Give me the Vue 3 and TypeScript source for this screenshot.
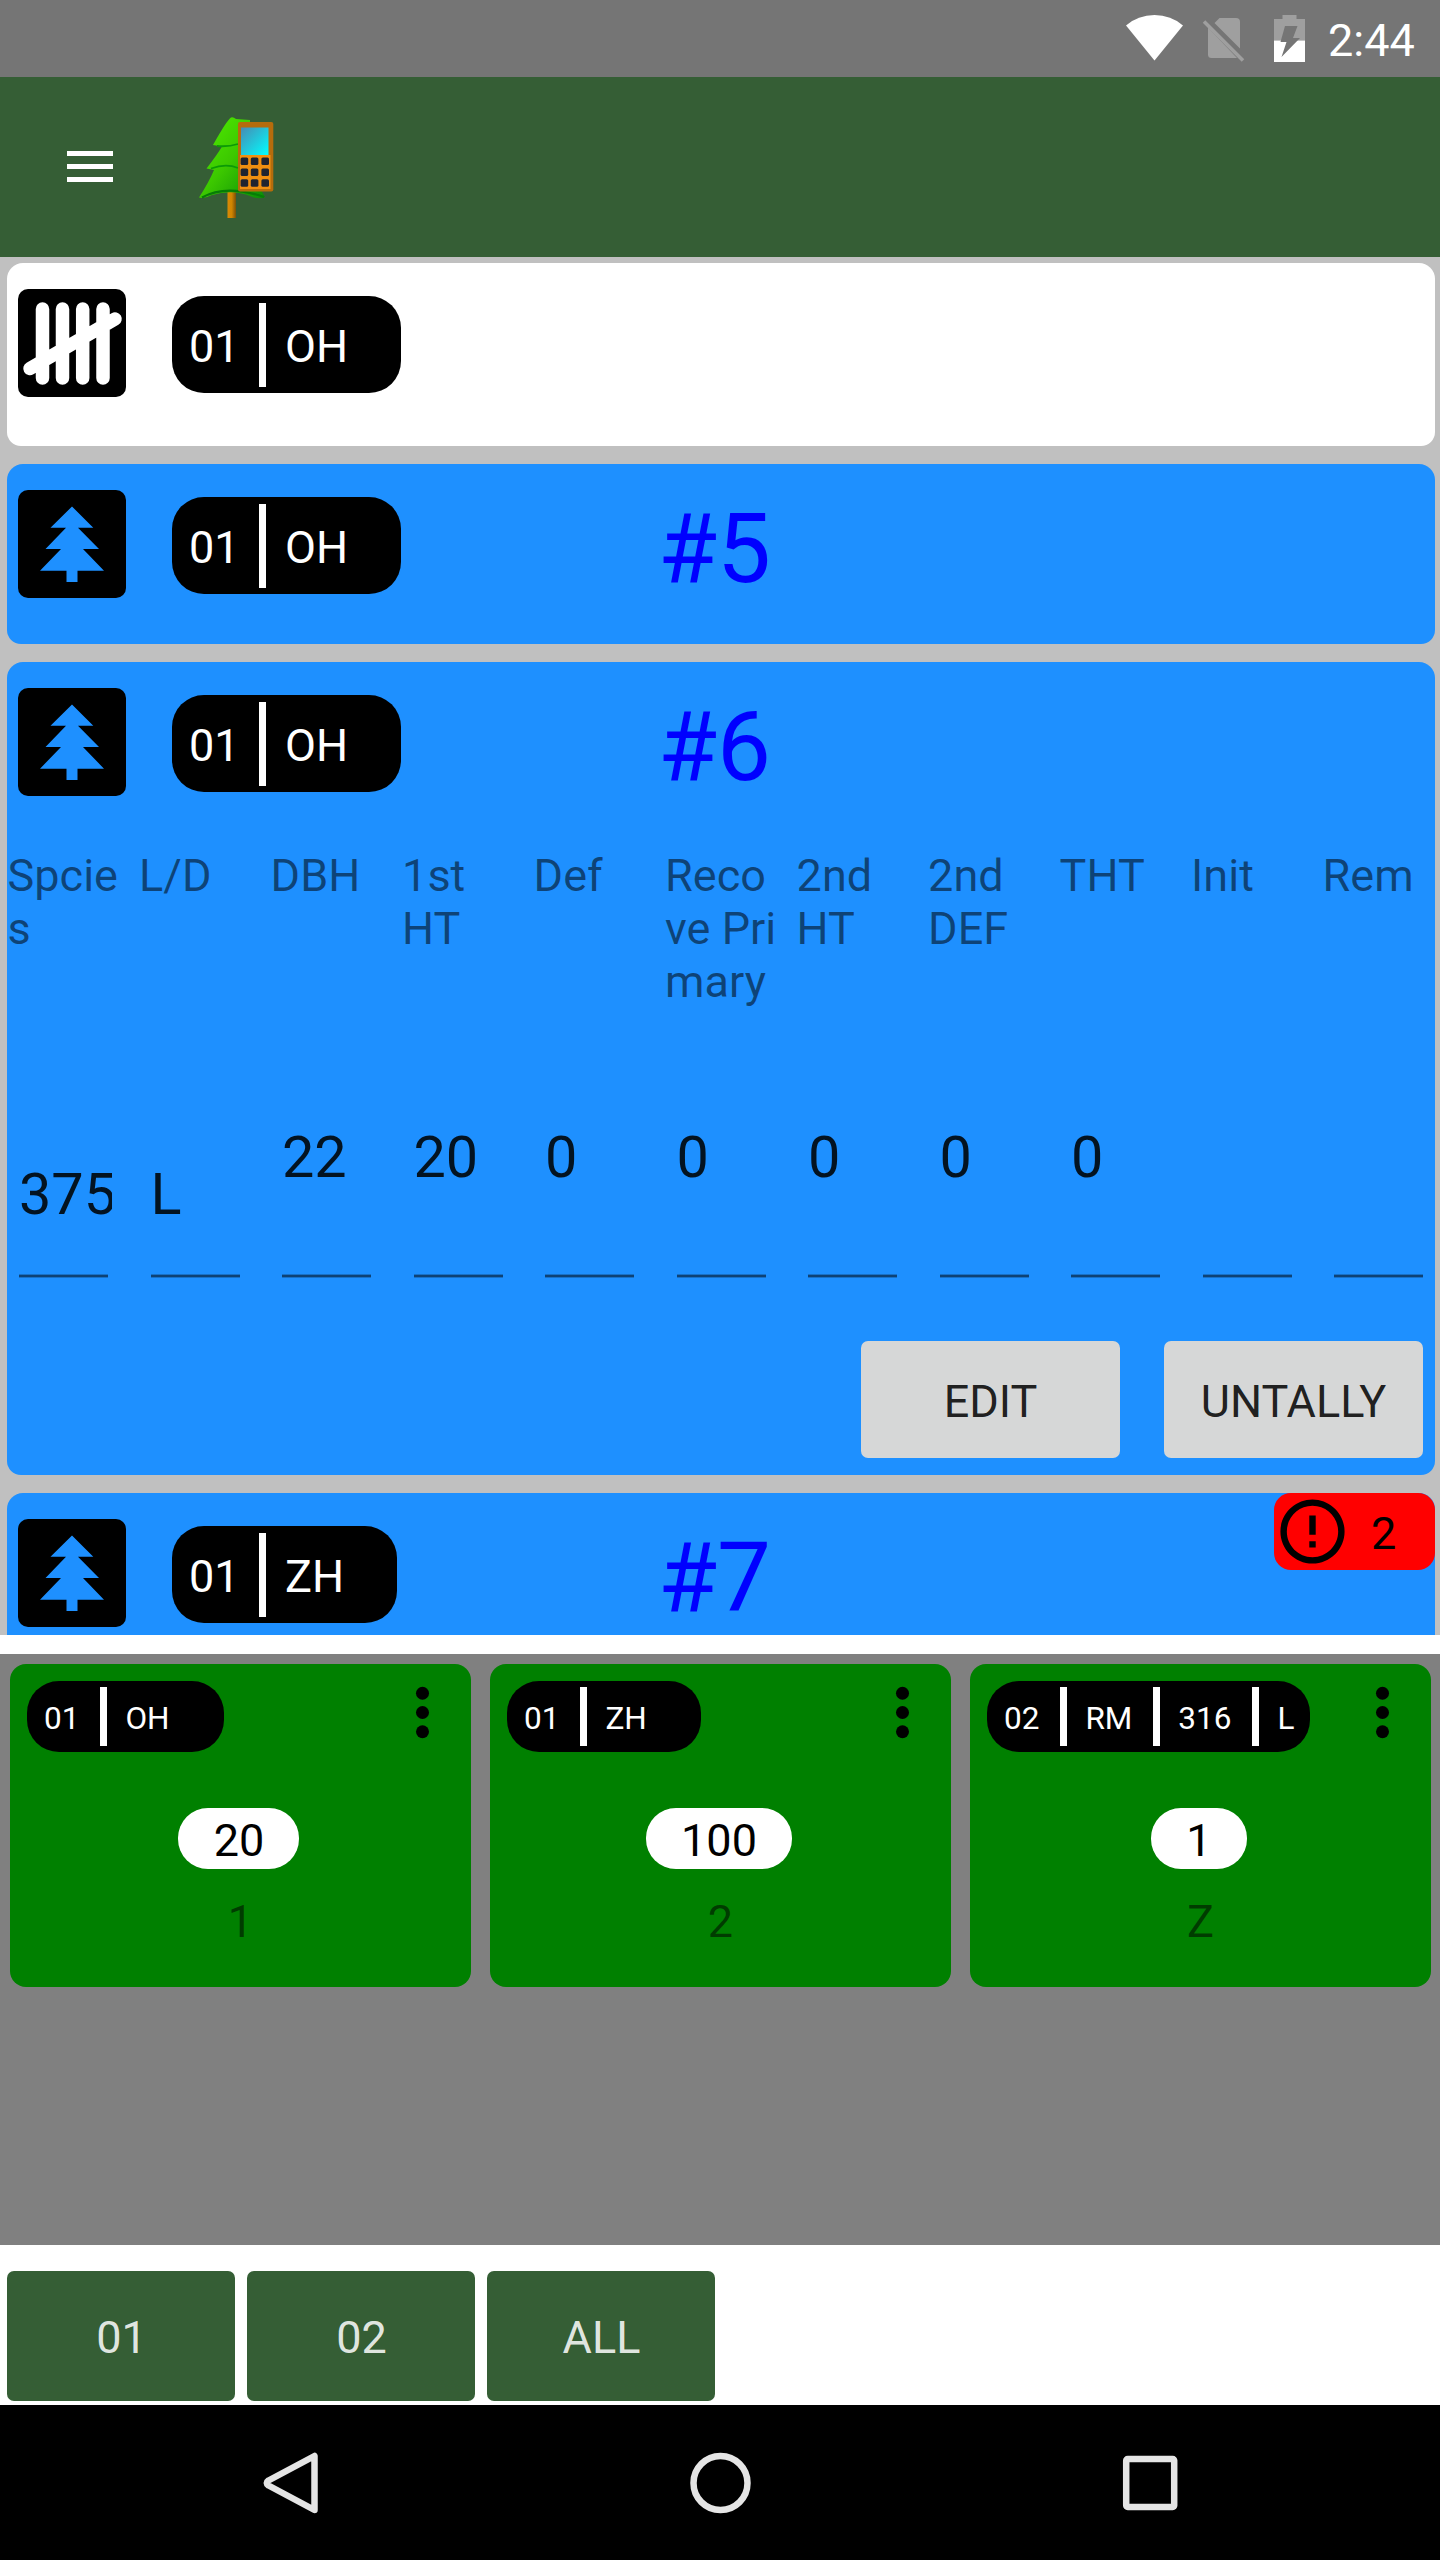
<script setup lang="ts">
interface TreeField {
  header: string[]
  value: string
  low?: boolean
}

interface Entry {
  id: string
  kind: 'tally' | 'tree'
  parts: string[]
  title?: string
  fields?: TreeField[]
  errors?: number
}

interface Tally {
  parts: string[]
  full: boolean
  count: number
  hotkey: string
}

const fields: TreeField[] = [
  { header: ['Spcie', 's'], value: '375', low: true },
  { header: ['L/D'], value: 'L', low: true },
  { header: ['DBH'], value: '22' },
  { header: ['1st', 'HT'], value: '20' },
  { header: ['Def'], value: '0' },
  { header: ['Reco', 've Pri', 'mary'], value: '0' },
  { header: ['2nd', 'HT'], value: '0' },
  { header: ['2nd', 'DEF'], value: '0' },
  { header: ['THT'], value: '0' },
  { header: ['Init'], value: '' },
  { header: ['Rem'], value: '' },
]

const entries: Entry[] = [
  { id: 'e4', kind: 'tally', parts: ['01', 'OH'] },
  { id: 'e5', kind: 'tree', parts: ['01', 'OH'], title: '#5' },
  { id: 'e6', kind: 'tree', parts: ['01', 'OH'], title: '#6', fields },
  { id: 'e7', kind: 'tree', parts: ['01', 'ZH'], title: '#7', errors: 2 },
]

const tallies: Tally[] = [
  { parts: ['01', 'OH'], full: false, count: 20, hotkey: '1' },
  { parts: ['01', 'ZH'], full: false, count: 100, hotkey: '2' },
  { parts: ['02', 'RM', '316', 'L'], full: true, count: 1, hotkey: 'Z' },
]

const strata: string[] = ['01', '02', 'ALL']
const keyRows = [161.3, 172.3, 183]
const keyCols = [244.4, 254.6, 265.2]
</script>

<template>
  <div class="screen">
    <header class="status">
      <svg class="status-icons" width="220" height="77" viewBox="1110 0 220 77">
        <path d="M1154.5 60.5L1126 25.5Q1138 15 1154.5 15T1183 25.5Z" fill="#fff" />
        <path d="M1214.5 23L1219.5 18H1236Q1240 18 1240 22V48.5Z" fill="#9f9f9f" />
        <path d="M1208 27.5L1237 58H1211.500Q1208 58 1208 54.500Z" fill="#9f9f9f" />
        <path d="M1204 21.500L1243 60.500" stroke="#9f9f9f" stroke-width="3.600" />
        <path d="M1274 40.500V19H1282.500V15H1296.500V19H1305V40.500Z" fill="#9f9f9f" />
        <path d="M1274 40.500H1305V62H1274Z" fill="#fff" />
        <path d="M1285 26H1297.500L1293 38H1300L1281.500 57L1286.500 42H1280.500Z" fill="#757575" />
      </svg>
      <span class="clock">2:44</span>
    </header>

    <nav class="appbar">
      <div class="burger"><i></i><i></i><i></i></div>
      <svg class="logo" width="80" height="104" viewBox="196 116 80 104">
        <defs>
          <linearGradient id="leaf" x1="0" y1="0" x2="1" y2="1">
            <stop offset="0" stop-color="#50f000" />
            <stop offset=".5" stop-color="#3cc800" />
            <stop offset="1" stop-color="#088a08" />
          </linearGradient>
          <linearGradient id="glass" x1="0" y1="0" x2="1" y2="1">
            <stop offset="0" stop-color="#468cb4" />
            <stop offset="1" stop-color="#00ffff" />
          </linearGradient>
          <linearGradient id="trunk" x1="0" y1="0" x2="1" y2="0">
            <stop offset="0" stop-color="#d88a06" />
            <stop offset=".5" stop-color="#cf8500" />
            <stop offset="1" stop-color="#7a4f08" />
          </linearGradient>
        </defs>
        <rect x="227.500" y="190" width="8.500" height="28" fill="url(#trunk)" />
        <path
          d="M231 117.500Q227 120 213 145L222 146.500Q217 155 206.500 168.500L214 170Q209 182 199 197.500Q204 199 212 195Q232 189 250 196Q259 200 265 197L250 170V120L236 119Q233 116.500 231 117.500Z"
          fill="url(#leaf)"
        />
        <path d="M217 146Q228 147 238 144M211 168.500Q226 163 238 168" fill="none" stroke="#0b9a06" stroke-width="1.800" />
        <path d="M202 197.500Q226 184 264 197" fill="none" stroke="#067c06" stroke-width="2.200" />
        <rect x="238" y="122" width="35.300" height="69.500" rx="2" fill="#b56c0c" />
        <rect x="240" y="155" width="30.500" height="34" fill="#f08f10" />
        <rect x="241" y="127.500" width="27.500" height="27.500" fill="url(#glass)" />
        <template v-for="y in keyRows" :key="y">
          <rect v-for="x in keyCols" :key="x" :x="x - 3.8" :y="y - 3.8" width="7.600" height="7.600" rx="1.500" fill="#1f2430" />
        </template>
      </svg>
    </nav>

    <main class="list">
      <section v-for="e in entries" :key="e.id" class="card" :class="[e.kind, { open: e.fields }]">
        <div class="card-head">
          <svg v-if="e.kind === 'tally'" class="kind-icon" width="108" height="108" viewBox="0 0 108 108">
            <rect width="108" height="108" rx="10" fill="#000" />
            <g stroke="#fff" stroke-width="13.500" stroke-linecap="round">
              <path d="M24.500 20V89M44.500 20V89M64.700 20V89M85 20V89M12 79.500L97 30" />
            </g>
          </svg>
          <svg v-else class="kind-icon" width="108" height="108" viewBox="0 0 108 108">
            <rect width="108" height="108" rx="10" fill="#000" />
            <path
              d="M54 16.500L75.300 37.700H60L81 59H65L86 80.700H59.500V92H48.500V80.700H22L43 59H27.500L48 37.700H32.500Z"
              fill="#1e90ff"
            />
          </svg>
          <div class="chip-slot">
            <div class="chip">
              <span v-for="p in e.parts" :key="p" class="part">{{ p }}</span>
            </div>
          </div>
          <h2 v-if="e.title" class="title">{{ e.title }}</h2>
        </div>
        <div v-if="e.errors" class="badge">
          <svg width="77" height="77" viewBox="0 0 24 24">
            <path
              d="M11 15h2v2h-2zm0-8h2v6h-2zm.99-5C6.470 2 2 6.480 2 12s4.470 10 9.990 10C17.520 22 22 17.520 22 12S17.520 2 11.990 2zM12 20c-4.420 0-8-3.580-8-8s3.580-8 8-8 8 3.580 8 8-3.580 8-8 8z"
            />
          </svg>
          <span>{{ e.errors }}</span>
        </div>
        <template v-if="e.fields">
          <div class="fields">
            <div v-for="(f, i) in e.fields" :key="i" class="field">
              <div class="field-head">
                <span v-for="line in f.header" :key="line">{{ line }}</span>
              </div>
              <div class="field-value" :class="{ low: f.low }">
                <span>{{ f.value }}</span>
              </div>
            </div>
          </div>
          <div class="actions">
            <button type="button">EDIT</button>
            <button type="button">UNTALLY</button>
          </div>
        </template>
      </section>
    </main>

    <section class="tallies">
      <article v-for="t in tallies" :key="t.hotkey" class="tile">
        <div class="tile-head">
          <div class="chip small" :class="{ full: t.full }">
            <span v-for="p in t.parts" :key="p" class="part">{{ p }}</span>
          </div>
          <svg width="77" height="77" viewBox="0 0 24 24" class="more">
            <circle cx="12" cy="6" r="2.030" />
            <circle cx="12" cy="12" r="2.030" />
            <circle cx="12" cy="18" r="2.030" />
          </svg>
        </div>
        <span class="count">{{ t.count }}</span>
        <span class="hotkey">{{ t.hotkey }}</span>
      </article>
    </section>

    <footer class="strata">
      <button v-for="s in strata" :key="s" type="button">{{ s }}</button>
    </footer>

    <div class="navbar">
      <svg width="64" height="64" viewBox="0 0 64 64">
        <path d="M54.500 5V59L8.500 34.500Q5 32 8.500 29.500Z" />
      </svg>
      <svg width="64" height="64" viewBox="0 0 64 64"><circle cx="31.500" cy="32" r="27" /></svg>
      <svg width="64" height="64" viewBox="0 0 64 64"><rect x="8.200" y="8" width="48" height="48" rx="1.500" /></svg>
    </div>
  </div>
</template>

<style>
body {
  margin: 0;
  background: #fff;
}
</style>

<style scoped>
.screen {
  width: 1440px;
  height: 2560px;
  display: flex;
  flex-direction: column;
  overflow: hidden;
  background: #fff;
  font-family: Roboto, "Liberation Sans", sans-serif;
  font-size: 45px;
  line-height: 53px;
  color: #000;
}
.screen * {
  box-sizing: border-box;
}
svg {
  display: block;
  flex: none;
}
button {
  padding: 0;
  border: 0;
  border-radius: 7px;
  font: inherit;
}

.status {
  height: 77px;
  flex: none;
  display: flex;
  background: #757575;
}
.status-icons {
  margin-left: 1110px;
}
.clock {
  margin: 14px 0 0 -2px;
  color: #fff;
}

.appbar {
  height: 180px;
  flex: none;
  display: flex;
  background: #355e35;
}
.burger {
  width: 46px;
  margin: 74px 0 0 67px;
  display: flex;
  flex-direction: column;
  gap: 8px;
}
.burger i {
  height: 5px;
  background: #fff;
}
.logo {
  margin: 39px 0 0 83px;
}

.list {
  height: 1378px;
  flex: none;
  padding: 6px 5px 0 7px;
  display: flex;
  flex-direction: column;
  gap: 18px;
  overflow: hidden;
  background: #c0c0c0;
}
.card {
  position: relative;
  height: 180px;
  flex: none;
  border-radius: 16px 16px 14px 14px;
  background: #1e90ff;
}
.card.tally {
  height: 183px;
  background: #fff;
}
.card.open {
  height: 813px;
}
.card-head {
  height: 180px;
  display: flex;
}
.kind-icon {
  margin: 26px 0 0 10.5px;
}
.chip-slot {
  width: 486px;
  margin: 33px 0 0 46.5px;
}
.chip {
  width: fit-content;
  height: 97px;
  padding: 0 33.5px 0 17px;
  display: flex;
  align-items: center;
  border-radius: 32px;
  background: #000;
  color: #fff;
}
.part {
  height: 84px;
  padding: 17px 19.5px 0 0;
}
.part + .part {
  padding-left: 19px;
  border-left: 7px solid #fff;
}
.chip.small {
  height: 71px;
  padding-right: 34px;
  font-size: 31.5px;
  line-height: 37px;
}
.chip.small .part {
  height: 59px;
  padding: 13px 20.5px 0 0;
}
.chip.small .part + .part {
  padding-left: 18.5px;
}
.chip.small.full {
  padding-right: 0;
}
.chip.small.full .part:last-child {
  padding-right: 15.5px;
}
.title {
  margin: 28px 0 0;
  font-size: 96px;
  line-height: 115px;
  font-weight: 400;
  color: #00f;
}

.badge {
  position: absolute;
  top: 0;
  right: 0;
  width: 161px;
  height: 77px;
  display: flex;
  border-radius: 17px;
  background: #f00;
}
.badge span {
  margin: 14px 0 0 20px;
}

.fields {
  height: 436px;
  padding-top: 7px;
  display: flex;
  gap: 18px;
}
.field {
  width: 113.5px;
  flex: none;
}
.field-head {
  height: 275px;
  padding-left: 0.6px;
  display: flex;
  flex-direction: column;
  white-space: pre;
  color: rgba(0, 0, 0, 0.54);
}
.field-value {
  height: 154px;
  width: 89px;
  margin-left: 12px;
  background: linear-gradient(rgba(0, 0, 0, 0.22) 0 1px, rgba(0, 0, 0, 0.54) 1px 3px, rgba(0, 0, 0, 0.22) 3px 4px) 0 100% / 100% 4px no-repeat;
  font-size: 57.6px;
  line-height: 68px;
  color: rgba(0, 0, 0, 0.87);
}
.field-value span {
  display: block;
  width: 93px;
  overflow: hidden;
}
.field-value.low {
  padding-top: 37px;
}
.actions {
  padding: 63px 12px 0 0;
  display: flex;
  justify-content: flex-end;
  gap: 44px;
}
.actions button {
  width: 259px;
  height: 117px;
  padding-top: 3px;
  background: #d6d7d7;
  color: rgba(0, 0, 0, 0.87);
}

.tallies {
  height: 591px;
  flex: none;
  margin-top: 19px;
  padding: 10px 9px 0 10px;
  display: flex;
  align-items: flex-start;
  gap: 19px;
  background: #808080;
}
.tile {
  width: 461px;
  height: 323px;
  display: flex;
  flex-direction: column;
  align-items: center;
  border-radius: 16px;
  background: #008000;
}
.tile-head {
  align-self: stretch;
  height: 144px;
  padding: 17px 10px 0 17px;
  display: flex;
  justify-content: space-between;
}
.more {
  margin-top: -7px;
}
.count {
  height: 61px;
  margin-right: 3.5px;
  padding: 6px 35px 0 35.5px;
  border-radius: 30px;
  background: #fff;
}
.hotkey {
  margin-top: 26px;
  color: rgba(0, 0, 0, 0.54);
}

.strata {
  height: 160px;
  flex: none;
  padding: 26px 7px 0;
  display: flex;
  gap: 12px;
}
.strata button {
  width: 228px;
  height: 130px;
  padding: 3px 0 0 1px;
  background: #355e35;
  color: rgba(255, 255, 255, 0.87);
}

.navbar {
  flex: 1;
  padding: 0 258px 0 260px;
  display: flex;
  align-items: center;
  justify-content: space-between;
  background: #000;
}
.navbar svg {
  fill: none;
  stroke: #e5e5e5;
  stroke-width: 6.5px;
  stroke-linejoin: round;
}
</style>
